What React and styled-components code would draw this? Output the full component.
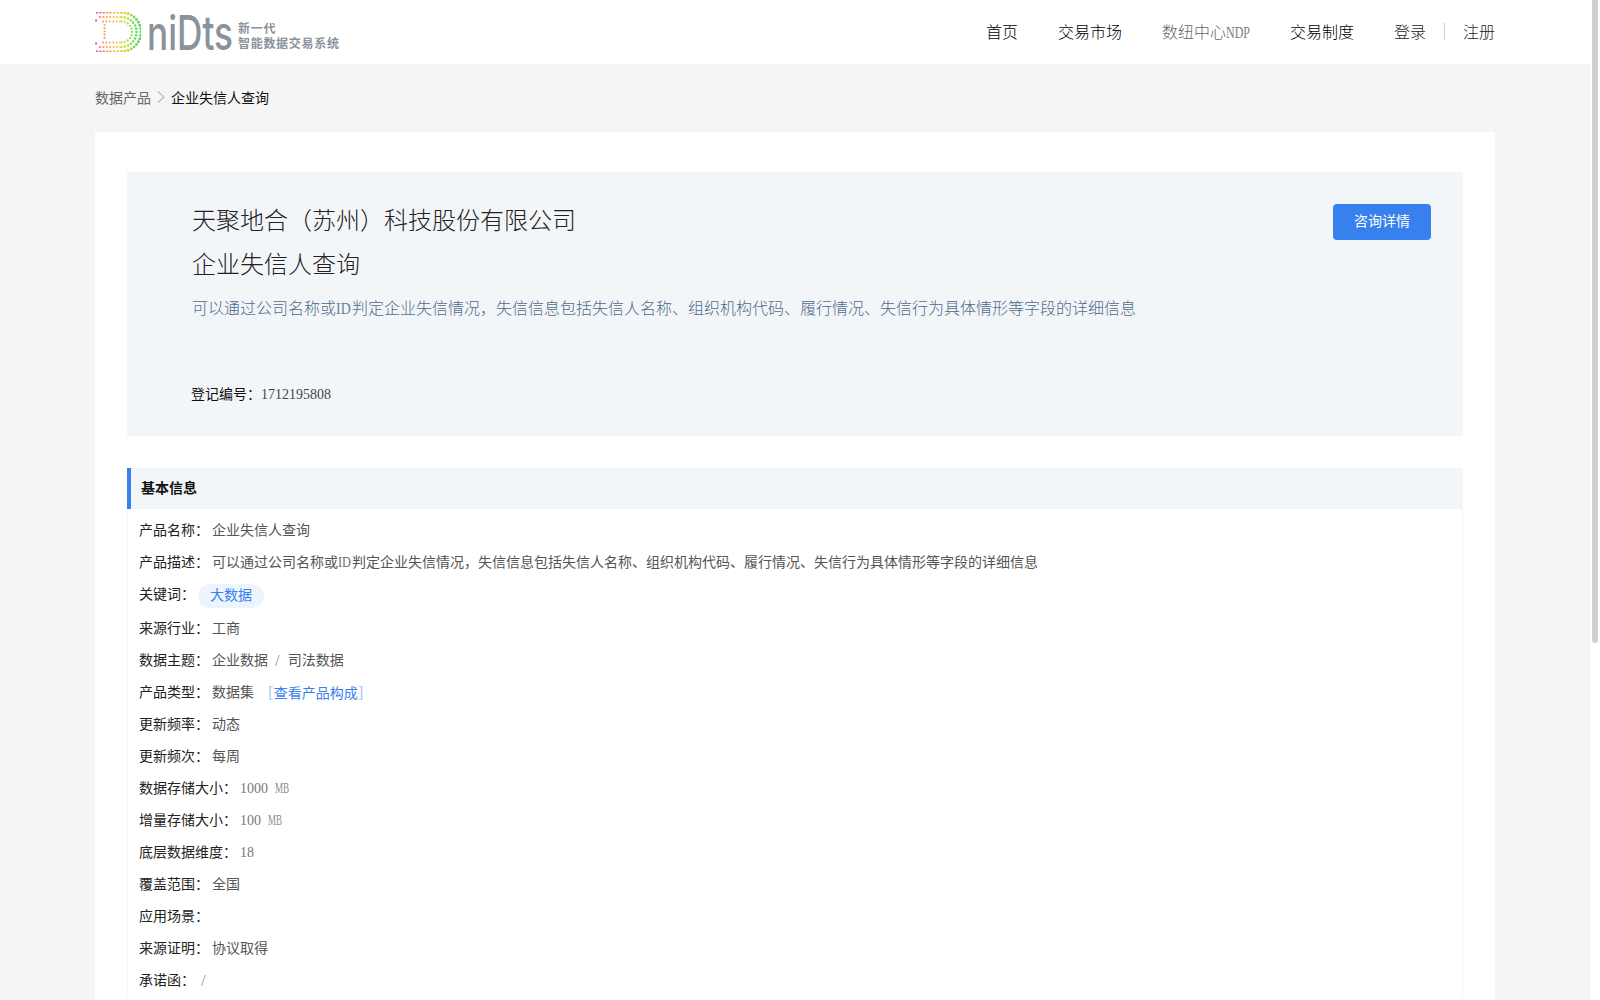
import React from "react";
import styled, { createGlobalStyle } from "styled-components";

const Global = createGlobalStyle`
  html, body { margin: 0; padding: 0; background: #fff; height: 100%; overflow: hidden; }
  body {
    font-family: "Liberation Serif", "Noto Sans CJK SC", serif;
    font-size: 14px;
    color: #333;
  }
`;

const Shell = styled.div`
  height: 100vh;
  display: flex;
  overflow: hidden;
`;
const Page = styled.div`
  flex: 1;
  min-width: 0;
  overflow: hidden;
  background: #f5f5f5;
`;
const ScrollLane = styled.div`
  width: 10px;
  flex: none;
  background: #fff;
  padding-left: 2px;
  box-sizing: border-box;
`;
const ScrollThumb = styled.div`
  width: 6px;
  height: 643px;
  border-radius: 0 0 3px 3px;
  background: #d0d0d0;
`;

const Header = styled.header`
  height: 64px;
  background: #fff;
`;
const HeaderInner = styled.div`
  width: 1400px;
  height: 100%;
  margin: 0 auto;
  display: flex;
  align-items: center;
  justify-content: space-between;
`;
const Logo = styled.div`
  display: flex;
  align-items: center;
`;
const Wordmark = styled.svg`
  display: block;
  width: 92px;
  height: 44px;
  margin-left: 3px;
  margin-top: 1px;
  overflow: visible;
`;
const Tagline = styled.div`
  display: flex;
  flex-direction: column;
  margin-left: 2px;
  margin-top: 5px;
  color: #8a929c;
  font-family: "Noto Sans CJK SC", sans-serif;
  font-size: 12px;
  font-weight: 700;
  line-height: 15px;
  letter-spacing: 0.7px;
`;
const Nav = styled.nav`
  display: flex;
  align-items: center;
  gap: 40px;
  font-size: 16px;
  font-weight: 300;
  line-height: 20px;
  padding-top: 1px;
`;
const NavLink = styled.a`
  color: ${(p) => (p.$muted ? "#666" : "#000")};
`;
const Auth = styled.div`
  display: flex;
  align-items: center;
  gap: 18px;
  color: #222;
`;
const Divider = styled.span`
  width: 1px;
  height: 17px;
  margin-top: -2px;
  background: #ccc;
`;

const Main = styled.main`
  width: 1400px;
  margin: 0 auto;
`;
const Crumbs = styled.div`
  height: 68px;
  box-sizing: border-box;
  padding-bottom: 2px;
  display: flex;
  align-items: center;
  color: #666;
`;
const CrumbChevron = styled.svg`
  width: 10px;
  height: 14px;
  margin: 0 5px;
`;
const CrumbCurrent = styled.span`
  color: #111;
`;
const Card = styled.section`
  background: #fff;
  padding: 40px 32px 20px;
`;
const Hero = styled.div`
  height: 264px;
  box-sizing: border-box;
  padding: 27px 32px 0 65px;
  background: #f3f6f9;
  display: flex;
  justify-content: space-between;
  align-items: flex-start;
`;
const ConsultButton = styled.button`
  width: 98px;
  height: 36px;
  margin-top: 5px;
  border: 0;
  border-radius: 4px;
  background: #3880ed;
  color: #fff;
  font: inherit;
  font-size: 14px;
  line-height: 36px;
  padding: 0;
  cursor: pointer;
`;
const HeroText = styled.div`
  display: flex;
  flex-direction: column;
`;
const HeroTitle = styled.h1`
  margin: 0;
  font-size: 24px;
  font-weight: 300;
  line-height: 44px;
  color: #222;
`;
const HeroDesc = styled.p`
  margin: 0;
  font-size: 16px;
  font-weight: 300;
  line-height: 44px;
  color: #4f6b8b;
`;
const RegLine = styled.div`
  margin-top: 54px;
  margin-left: -1px;
  line-height: 20px;
  color: #111;
`;
const RegValue = styled.span`
  color: #444;
`;

const Section = styled.div`
  margin-top: 32px;
`;
const SectionHead = styled.h2`
  margin: 0;
  height: 41px;
  box-sizing: border-box;
  padding-left: 10px;
  border-left: 4px solid #3880ed;
  background: #f3f6f9;
  font-size: 14px;
  font-weight: 700;
  line-height: 41px;
  color: #111;
`;
const Panel = styled.div`
  box-sizing: border-box;
  padding: 6px 11px 0;
  border-left: 1px solid #f2f4f7;
  border-right: 1px solid #f2f4f7;
`;
const Row = styled.div`
  display: flex;
  align-items: center;
  height: ${(p) => (p.$tall ? "34px" : "32px")};
  line-height: 20px;
`;
const Label = styled.span`
  color: #222;
  margin-right: 3px;
  margin-bottom: ${(p) => (p.$raised ? "3px" : "0")};
`;
const Value = styled.span`
  color: #555;
  white-space: pre;
`;
const Tag = styled.span`
  height: 24px;
  line-height: 24px;
  padding: 0 12px;
  border-radius: 12px;
  background: #ecf4fd;
  color: #3880ed;
`;
const Slash = styled.span`
  color: #999;
  font-size: 17px;
  margin: 0 8px 0 ${(p) => p.$left}px;
`;
const ProductLink = styled.a`
  color: #3880ed;
  margin-left: 14px;
`;
const Bracket = styled.span`
  color: #a9c8f5;
  font-size: 17px;
`;
const Narrow = styled.span`
  display: inline-block;
  transform: scaleX(${(p) => p.$scale});
  transform-origin: left center;
  margin-right: ${(p) => p.$trim}px;
  opacity: 0.85;
`;
const Num = styled.span`
  color: #777;
`;

function DotD() {
  const stops = [
    [0, [255, 84, 140]],
    [0.3, [255, 170, 70]],
    [0.6, [226, 224, 60]],
    [1, [60, 220, 110]],
  ];
  const color = (x) => {
    const t = Math.max(0, Math.min(1, x / 46));
    for (let i = 1; i < stops.length; i++) {
      if (t <= stops[i][0]) {
        const [a, ca] = stops[i - 1];
        const [b, cb] = stops[i];
        const k = (t - a) / (b - a);
        const c = ca.map((v, j) => Math.round(v + (cb[j] - v) * k));
        return `rgb(${c.join(",")})`;
      }
    }
    return "rgb(60,220,110)";
  };
  const dots = [];
  const rings = [
    { r: 19.5, x0: 2, step: 3.4, rd: 1.25 },
    { r: 15, x0: 5, step: 3.4, rd: 1.1 },
    { r: 10.5, x0: 8, step: 3.4, rd: 0.95 },
  ];
  const cx = 26.5;
  const cy = 20;
  rings.forEach((ring) => {
    for (let x = ring.x0; x < cx; x += ring.step) {
      dots.push([x, cy - ring.r, ring.rd]);
      dots.push([x, cy + ring.r, ring.rd]);
    }
    const n = Math.round((Math.PI * ring.r) / ring.step);
    for (let i = 0; i <= n; i++) {
      const a = -Math.PI / 2 + (Math.PI * i) / n;
      dots.push([cx + ring.r * Math.cos(a), cy + ring.r * Math.sin(a), ring.rd + 0.2]);
    }
  });
  for (let y = 13; y <= 27; y += 3.2) {
    dots.push([9.5, y, 1]);
  }
  for (const y of [8.5, 31.5]) dots.push([1, y, 1.2]);
  return (
    <svg width="46" height="40" viewBox="0 0 46 40" style={{ display: "block" }}>
      {dots.map(([x, y, r], i) => (
        <circle key={i} cx={x} cy={y} r={r} fill={color(x)} />
      ))}
    </svg>
  );
}

export default function App() {
  return (
    <>
      <Global />
      <Shell>
        <Page>
          <Header>
            <HeaderInner>
              <Logo>
                <DotD />
                <Wordmark viewBox="0 0 92 44">
                  <text
                    x="3"
                    y="39"
                    fontFamily="Inter, sans-serif"
                    fontSize="48"
                    fontWeight="500"
                    fill="#8a929c"
                    textLength="86"
                    lengthAdjust="spacingAndGlyphs"
                  >
                    niDts
                  </text>
                </Wordmark>
                <Tagline>
                  <span>新一代</span>
                  <span>智能数据交易系统</span>
                </Tagline>
              </Logo>
              <Nav>
                <NavLink>首页</NavLink>
                <NavLink>交易市场</NavLink>
                <NavLink $muted>
                  数纽中心<Narrow $scale={0.75} $trim={-8}>NDP</Narrow>
                </NavLink>
                <NavLink>交易制度</NavLink>
                <Auth>
                  <span>登录</span>
                  <Divider />
                  <span>注册</span>
                </Auth>
              </Nav>
            </HeaderInner>
          </Header>
          <Main>
            <Crumbs>
              <span>数据产品</span>
              <CrumbChevron viewBox="0 0 10 14">
                <path d="M2 1.5 L8 7 L2 12.5" fill="none" stroke="#bbb" strokeWidth="1.2" />
              </CrumbChevron>
              <CrumbCurrent>企业失信人查询</CrumbCurrent>
            </Crumbs>
            <Card>
              <Hero>
                <HeroText>
                  <HeroTitle>天聚地合（苏州）科技股份有限公司</HeroTitle>
                  <HeroTitle>企业失信人查询</HeroTitle>
                  <HeroDesc>
                    可以通过公司名称或<Narrow $scale={0.87} $trim={-0.9}>ID</Narrow>
                    判定企业失信情况，失信信息包括失信人名称、组织机构代码、履行情况、失信行为具体情形等字段的详细信息
                  </HeroDesc>
                  <RegLine>
                    登记编号：<RegValue>1712195808</RegValue>
                  </RegLine>
                </HeroText>
                <ConsultButton>咨询详情</ConsultButton>
              </Hero>
              <Section>
                <SectionHead>基本信息</SectionHead>
                <Panel>
                  <Row>
                    <Label>产品名称：</Label>
                    <Value>企业失信人查询</Value>
                  </Row>
                  <Row>
                    <Label>产品描述：</Label>
                    <Value>
                      可以通过公司名称或<Narrow $scale={0.88} $trim={-0.8}>ID</Narrow>
                      判定企业失信情况，失信信息包括失信人名称、组织机构代码、履行情况、失信行为具体情形等字段的详细信息
                    </Value>
                  </Row>
                  <Row $tall>
                    <Label $raised>关键词：</Label>
                    <Tag>大数据</Tag>
                  </Row>
                  <Row>
                    <Label>来源行业：</Label>
                    <Value>工商</Value>
                  </Row>
                  <Row>
                    <Label>数据主题：</Label>
                    <Value>企业数据</Value>
                    <Slash $left={7}>/</Slash>
                    <Value>司法数据</Value>
                  </Row>
                  <Row>
                    <Label>产品类型：</Label>
                    <Value>数据集</Value>
                    <ProductLink>
                      <Bracket>[</Bracket>查看产品构成<Bracket>]</Bracket>
                    </ProductLink>
                  </Row>
                  <Row>
                    <Label>更新频率：</Label>
                    <Value>动态</Value>
                  </Row>
                  <Row>
                    <Label>更新频次：</Label>
                    <Value>每周</Value>
                  </Row>
                  <Row>
                    <Label>数据存储大小：</Label>
                    <Num>
                      1000{"\u00a0\u00a0"}<Narrow $scale={0.65} $trim={-7.7}>MB</Narrow>
                    </Num>
                  </Row>
                  <Row>
                    <Label>增量存储大小：</Label>
                    <Num>
                      100{"\u00a0\u00a0"}<Narrow $scale={0.65} $trim={-7.7}>MB</Narrow>
                    </Num>
                  </Row>
                  <Row>
                    <Label>底层数据维度：</Label>
                    <Num>18</Num>
                  </Row>
                  <Row>
                    <Label>覆盖范围：</Label>
                    <Value>全国</Value>
                  </Row>
                  <Row>
                    <Label>应用场景：</Label>
                  </Row>
                  <Row>
                    <Label>来源证明：</Label>
                    <Value>协议取得</Value>
                  </Row>
                  <Row>
                    <Label>承诺函：</Label>
                    <Slash $left={3}>/</Slash>
                  </Row>
                </Panel>
              </Section>
            </Card>
          </Main>
        </Page>
        <ScrollLane>
          <ScrollThumb />
        </ScrollLane>
      </Shell>
    </>
  );
}
